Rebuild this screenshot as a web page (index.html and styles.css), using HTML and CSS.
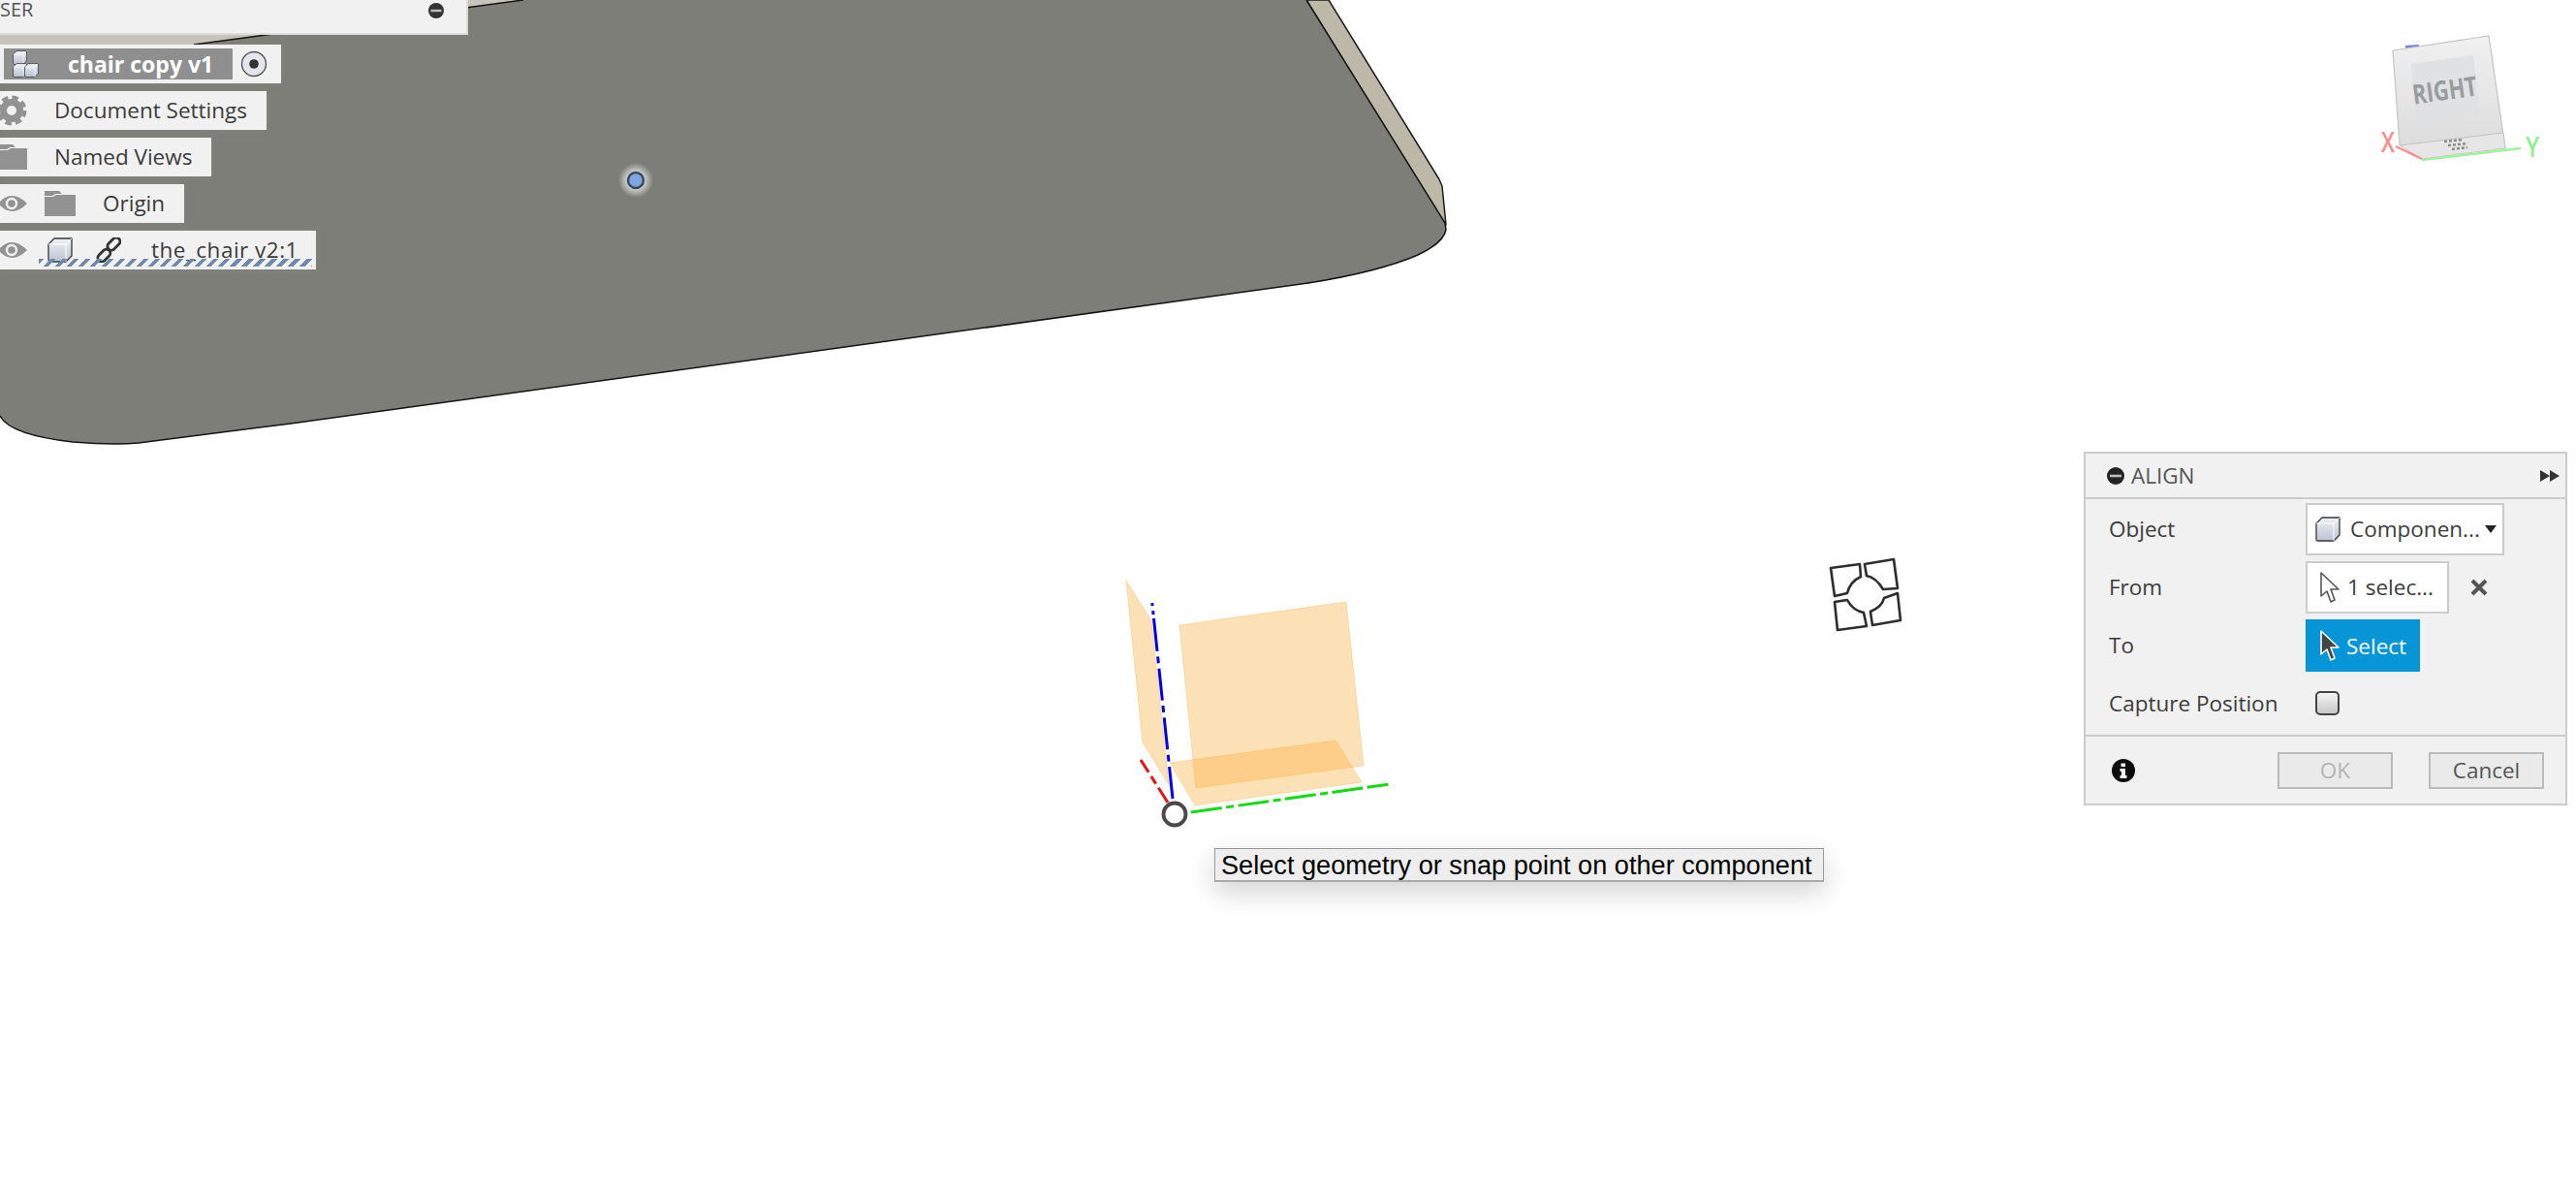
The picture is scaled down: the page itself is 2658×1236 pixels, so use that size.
FILE: index.html
```html
<!DOCTYPE html>
<html>
<head>
    <title>Align</title>
    <link rel="stylesheet" href="styles.css">
</head>
<body>
    <div class="stage">
        <!-- 3D viewport: model, datum planes, view cube -->
        <svg class="scene" width="2658" height="1236" viewBox="0 0 2658 1236">
            <defs>
                <linearGradient id="cube-front" x1="0" y1="0" x2="0" y2="1">
                    <stop offset="0" stop-color="#f0f0f0"/>
                    <stop offset="1" stop-color="#dcdcdc"/>
                </linearGradient>
                <linearGradient id="icon-face" x1="0" y1="0" x2="0" y2="1">
                    <stop offset="0" stop-color="#eef0f4"/>
                    <stop offset="1" stop-color="#bcc3d0"/>
                </linearGradient>
                <radialGradient id="halo">
                    <stop offset="0.4" stop-color="#fff" stop-opacity="0.75"/>
                    <stop offset="1" stop-color="#fff" stop-opacity="0"/>
                </radialGradient>
                <filter id="soft"><feGaussianBlur stdDeviation="0.6"/></filter>
                <symbol id="cube" viewBox="0 0 26 26">
                    <path d="M1 7 L7 1 H25 V19 L19 25 H3 Q1 25 1 23 Z" fill="url(#icon-face)" stroke="#33373d" stroke-width="1.3" stroke-linejoin="round"/>
                    <path d="M1 7 H19 L25 1 M19 7 V25" fill="none" stroke="#fff" stroke-width="1"/>
                </symbol>
            </defs>

            <!-- chair seat -->
            <path d="M0 0 H540 L200 46 H0 Z" fill="#c6c3b9"/>
            <path d="M1348 0 H1371 L1485 185 L1488 192 L1492 232 L1491 232 Z" fill="#bdb8a8" stroke="#1c1c1c" stroke-width="1.5" stroke-linejoin="round"/>
            <path d="M540 0 H1348 L1491 230 L1492 237 C1490 248 1478 256 1463 263 C1440 273 1400 284 1350 292 L300 437 L143 457 C120 459 100 458 75 456 C40 452 8 445 0 429 V46 H200 Z" fill="#7d7e77"/>
            <path d="M540 0 L200 46 M1348 0 L1491 230 L1492 237 C1490 248 1478 256 1463 263 C1440 273 1400 284 1350 292 L300 437 L143 457 C120 459 100 458 75 456 C40 452 8 445 0 429" fill="none" stroke="#141414" stroke-width="1.5"/>

            <!-- selected point on the seat -->
            <circle cx="656" cy="186" r="18" fill="url(#halo)"/>
            <circle cx="656" cy="186" r="8" fill="#7fa5e2" stroke="#3d4a5e" stroke-width="2.5"/>

            <!-- origin planes -->
            <g fill="#fbb040" fill-opacity="0.38" stroke="#fbb040" stroke-opacity="0.35">
                <path d="M1162 599 L1188 640 L1206 810 L1179 766 Z"/>
                <path d="M1217 645 L1389 621 L1407 790 L1234 813 Z"/>
                <path d="M1207 787 L1378 764 L1405 807 L1233 831 Z"/>
            </g>
            <g fill="none" stroke-width="3">
                <path d="M1210 824 L1188.800 622" stroke="#0000f0" stroke-dasharray="33 5.500 7 5.500 33 5.500 7 5.500 33 5.500 7 5.500 34 4 4 5 3"/>
                <path d="M1229 838 L1434 809" stroke="#10dc10" stroke-dasharray="32 4.500 8 4.500 32 4.500 8 4.500 32 4.500 8 4.500 32 4.500 22"/>
                <path d="M1205 828 L1177 784" stroke="#f01010" stroke-dasharray="18 5 9 5"/>
            </g>
            <circle cx="1212" cy="840" r="11.5" fill="#fff" stroke="#484848" stroke-width="3.8" filter="url(#soft)"/>

            <!-- capture cursor -->
            <g fill="none" stroke="#2e2e2e" stroke-width="2.6" stroke-linejoin="round" filter="url(#soft)">
                <path d="M1889 586 L1919 582 L1920 595 Q1909 600 1906 612 L1893 615 Z"/>
                <path d="M1924 582 L1954 577 L1958 607 L1943 608 Q1936 596 1926 594 Z"/>
                <path d="M1893 621 L1906 619 Q1912 630 1923 632 L1926 646 L1896 650 Z"/>
                <path d="M1930 631 Q1942 626 1944 617 L1958 612 L1961 640 L1932 645 Z"/>
            </g>

            <!-- view cube -->
            <path d="M2482 47 L2496 46 L2496 50 L2482 52 Z" fill="#7a7af0"/>
            <path d="M2469 52 L2568 37 L2585 153 L2476 150 Z" fill="url(#cube-front)" stroke="#c4c4c4" stroke-width="1.2"/>
            <path d="M2476 150 L2583 137 L2585 153 L2499 164 Z" fill="#e6e6e6" stroke="#c4c4c4"/>
            <path d="M2488 66 L2552 57 L2559 119 L2493 128 Z" fill="#e0e1e3"/>
            <path d="M2522 146 L2542 144 M2526 150 L2546 148 M2530 154 L2546 152" stroke="#8b8b8b" stroke-width="2.500" stroke-dasharray="3 2"/>
            <text class="cube-label" x="2489" y="103" textLength="67" lengthAdjust="spacingAndGlyphs" transform="rotate(-8 2523 93)">RIGHT</text>
            <path d="M2472 151 L2499 164" stroke="#ff8a8a" stroke-width="2"/>
            <path d="M2499 165 L2601 153" stroke="#9cf59c" stroke-width="2.500"/>
            <text class="axis-x" x="2457" y="157" textLength="14" lengthAdjust="spacingAndGlyphs">X</text>
            <text class="axis-y" x="2606" y="162" textLength="14" lengthAdjust="spacingAndGlyphs">Y</text>
        </svg>

        <!-- browser tree -->
        <div class="browser">
            <div class="browser-head">
                <span class="browser-title">SER</span>
                <svg class="collapse-icon" width="16" height="16" viewBox="0 0 16 16"><circle cx="8" cy="8" r="8" fill="#333"/><rect x="2.500" y="6.800" width="11" height="2.400" fill="#bbb"/></svg>
            </div>
            <div class="tree">
                <div class="tree-row">
                    <div class="root-label">
                        <svg class="icon-parts" width="30" height="30" viewBox="0 0 30 30">
                            <use href="#cube" x="3" y="1" width="15" height="15"/>
                            <use href="#cube" x="3" y="14" width="15" height="15"/>
                            <use href="#cube" x="15" y="14" width="15" height="15"/>
                        </svg>
                        <span>chair copy v1</span>
                    </div>
                    <svg class="radio" width="28" height="28" viewBox="0 0 28 28"><circle cx="14" cy="14" r="12.500" fill="#e4e6ee" stroke="#555" stroke-width="1.400"/><circle cx="14" cy="14" r="4.800" fill="#333"/></svg>
                </div>
                <div class="tree-row">
                    <svg class="icon-gear" width="28" height="32" viewBox="0 0 28 32"><g fill="none" stroke="#929292"><circle cx="12" cy="16" r="8.500" stroke-width="7"/><circle cx="12" cy="16" r="13.500" stroke-width="4" stroke-dasharray="6.500 4.100"/></g></svg>
                    <span class="tree-name">Document Settings</span>
                </div>
                <div class="tree-row">
                    <svg class="icon-folder" width="28" height="26" viewBox="0 0 28 26"><path d="M-4 0 H13 L16 3 H10 L7 5 H-4 Z M-4 6 H8 L11 4 H28 V26 H-4 Z" fill="#929292"/></svg>
                    <span class="tree-name">Named Views</span>
                </div>
                <div class="tree-row">
                    <svg class="icon-eye" width="28" height="20" viewBox="0 0 28 20"><path d="M-2 10 Q12 -6 28 10 Q12 26 -2 10 Z" fill="#929292"/><circle cx="12" cy="10" r="5" fill="none" stroke="#f1f1f1" stroke-width="2.400"/></svg>
                    <svg class="icon-folder origin-folder" width="32" height="26" viewBox="0 0 32 26"><path d="M0 0 H15 L18 3 H11 L8 5 H0 Z M0 6 H9 L12 4 H32 V26 H0 Z" fill="#929292"/></svg>
                    <span class="tree-name origin-name">Origin</span>
                </div>
                <div class="tree-row">
                    <svg class="icon-eye" width="28" height="20" viewBox="0 0 28 20"><path d="M-2 10 Q12 -6 28 10 Q12 26 -2 10 Z" fill="#929292"/><circle cx="12" cy="10" r="5" fill="none" stroke="#f1f1f1" stroke-width="2.400"/></svg>
                    <svg class="icon-cube" width="26" height="26"><use href="#cube" width="26" height="26"/></svg>
                    <svg class="icon-link" width="26" height="26" viewBox="0 0 26 26"><g fill="none" stroke="#333" stroke-width="2.800"><rect x="11" y="3" width="15" height="8" rx="4" transform="rotate(-45 18 7)"/><rect x="1" y="15" width="15" height="8" rx="4" transform="rotate(-45 8 19)"/></g></svg>
                    <span class="tree-name linked-name">the_chair v2:1</span>
                    <div class="link-underline"></div>
                </div>
            </div>
        </div>

        <!-- command dialog -->
        <div class="dialog">
            <div class="dialog-head">
                <svg width="18" height="18" viewBox="0 0 18 18"><circle cx="9" cy="9" r="9" fill="#222"/><rect x="3" y="7.700" width="12" height="2.600" fill="#bbb"/></svg>
                <span class="dialog-title">ALIGN</span>
                <svg class="expand-icon" width="20" height="12" viewBox="0 0 20 12"><path d="M0 0 L10 6 L0 12 Z M10 0 L20 6 L10 12 Z" fill="#333"/></svg>
            </div>
            <div class="dialog-body">
                <div class="field">
                    <span class="field-label">Object</span>
                    <div class="input-box object-box">
                        <svg class="input-cube" width="26" height="26"><use href="#cube" width="26" height="26"/></svg>
                        <span>Componen...</span>
                        <svg class="caret" width="12" height="8" viewBox="0 0 12 8"><path d="M0 0 H12 L6 8 Z" fill="#222"/></svg>
                    </div>
                </div>
                <div class="field">
                    <span class="field-label">From</span>
                    <div class="input-box from-box">
                        <svg width="20" height="32" viewBox="0 0 20 32"><path d="M1 1 V25 L7 20 L11 31 L15 29 L11 18 L19 18 Z" fill="#fff" stroke="#555" stroke-width="1.600" stroke-linejoin="round"/></svg>
                        <span>1 selec...</span>
                    </div>
                    <svg class="clear-icon" width="18" height="18" viewBox="0 0 18 18"><path d="M2 2 L16 16 M16 2 L2 16" stroke="#555" stroke-width="4"/></svg>
                </div>
                <div class="field">
                    <span class="field-label">To</span>
                    <div class="select-box">
                        <svg width="20" height="32" viewBox="0 0 20 32"><path d="M1 1 V25 L7 20 L11 31 L15 29 L11 18 L19 18 Z" fill="#444" stroke="#fff" stroke-width="1.600" stroke-linejoin="round"/></svg>
                        <span>Select</span>
                    </div>
                </div>
                <div class="field">
                    <span class="field-label">Capture Position</span>
                    <div class="checkbox"></div>
                </div>
            </div>
            <div class="dialog-foot">
                <svg class="info-icon" width="24" height="24" viewBox="0 0 24 24"><circle cx="12" cy="12" r="12" fill="#0c0c0c"/><path d="M9.500 4.500 H14 V8 H9.500 Z M8.500 10 H14 V17 H15.500 V20 H8.500 V17 H10 V13 H8.500 Z" fill="#f1f1f1"/></svg>
                <button class="btn btn-disabled">OK</button>
                <button class="btn">Cancel</button>
            </div>
        </div>

        <div class="hint">Select geometry or snap point on other component</div>
    </div>
</body>
</html>
```

FILE: styles.css
```css
html, body {
    margin: 0;
    padding: 0;
    background-color: #ffffff;
}

.stage {
    position: relative;
    width: 2658px;
    height: 1236px;
    overflow: hidden;
    font-family: "Open Sans", Arial, sans-serif;
    font-size: 22.5px;
    color: #3c3c3c;
}

.scene {
    position: absolute;
    left: 0;
    top: 0;
}

.cube-label {
    font-family: "Open Sans", sans-serif;
    font-weight: 700;
    font-size: 28px;
    fill: #999ca0;
}

.axis-x, .axis-y {
    font-family: "Open Sans", sans-serif;
    font-weight: 600;
    font-size: 28px;
}

.axis-x {
    fill: #ff8a8a;
}

.axis-y {
    fill: #8cf08c;
}

/* Browser tree */
.browser {
    position: absolute;
    left: 0;
    top: 0;
    display: flex;
    flex-direction: column;
    align-items: flex-start;
}

.browser-head {
    display: flex;
    align-items: flex-start;
    justify-content: space-between;
    box-sizing: border-box;
    width: 483px;
    height: 36px;
    padding-right: 23px;
    background-color: #f1f1f1;
    border-right: 2px solid #dddddd;
    border-bottom: 2px solid #dddddd;
}

.browser-title {
    font-size: 20px;
    line-height: 20px;
    color: #555555;
}

.collapse-icon {
    margin-top: 3px;
}

.tree {
    display: flex;
    flex-direction: column;
    align-items: flex-start;
    gap: 8px;
    margin-top: 10px;
}

.tree-row {
    position: relative;
    display: flex;
    align-items: center;
    height: 40px;
    padding-right: 20px;
    background-color: #f1f1f1;
    box-shadow: 0 0 6px rgba(255, 255, 255, 0.08);
}

.root-label {
    display: flex;
    align-items: center;
    box-sizing: border-box;
    width: 236px;
    height: 32px;
    margin-left: 4px;
    padding-left: 6px;
    background-color: #8f8f8f;
    color: #ffffff;
    font-size: 23px;
    font-weight: 700;
}

.root-label span {
    margin-left: 30px;
}

.radio {
    margin-left: 8px;
    margin-right: -6px;
}

.tree-name {
    margin-left: 28px;
    padding-bottom: 2px;
}

.origin-folder {
    margin-left: 18px;
}

.origin-name {
    margin-left: 28px;
}

.icon-cube {
    margin-left: 21px;
}

.icon-link {
    margin-left: 24px;
}

.linked-name {
    margin-left: 31px;
    margin-right: -2px;
    letter-spacing: 0.5px;
}

.link-underline {
    position: absolute;
    left: 40px;
    right: 4px;
    bottom: 3px;
    height: 8px;
    background-image: repeating-linear-gradient(135deg, #7089ae 0 4px, transparent 4px 8.5px);
}

/* Align dialog */
.dialog {
    position: absolute;
    left: 2150px;
    top: 466px;
    box-sizing: border-box;
    width: 499px;
    height: 365px;
    background-color: #f1f1f1;
    border: 2px solid #cccccc;
}

.dialog-head {
    display: flex;
    align-items: center;
    box-sizing: border-box;
    height: 47px;
    padding: 0 6px 0 22px;
    border-bottom: 2px solid #cccccc;
}

.dialog-title {
    margin-left: 7px;
    color: #555555;
}

.expand-icon {
    margin-left: auto;
}

.dialog-body {
    display: flex;
    flex-direction: column;
    gap: 6px;
    box-sizing: border-box;
    height: 245px;
    padding: 4px 0 0 24px;
    border-bottom: 2px solid #cccccc;
}

.field {
    display: flex;
    align-items: center;
    height: 54px;
}

.field-label {
    width: 203px;
    flex-shrink: 0;
    padding-bottom: 2px;
}

.input-box {
    display: flex;
    align-items: center;
    box-sizing: border-box;
    height: 54px;
    background-color: #ffffff;
    border: 2px solid #cccccc;
    padding-bottom: 1px;
}

.object-box {
    width: 205px;
    padding-left: 8px;
}

.object-box span {
    margin-left: 10px;
    white-space: nowrap;
}

.caret {
    margin-left: 5px;
}

.from-box {
    width: 148px;
    padding-left: 13px;
}

.from-box span {
    margin-left: 8px;
    white-space: nowrap;
}

.clear-icon {
    margin-left: 22px;
}

.select-box {
    display: flex;
    align-items: center;
    box-sizing: border-box;
    width: 118px;
    height: 54px;
    padding-left: 15px;
    background-color: #0696d7;
    color: #ffffff;
}

.select-box span {
    margin-left: 7px;
}

.checkbox {
    box-sizing: border-box;
    width: 25px;
    height: 25px;
    margin-left: 10px;
    margin-top: -2px;
    border: 2px solid #444444;
    border-radius: 5px;
    background-image: linear-gradient(#f4f4f4, #c8c8c8);
}

.dialog-foot {
    display: flex;
    align-items: center;
    height: 69px;
    padding-left: 27px;
}

.btn {
    box-sizing: border-box;
    width: 119px;
    height: 38px;
    padding: 0;
    background-color: #eaeaea;
    border: 2px solid #bbbbbb;
    border-radius: 0;
    font-family: inherit;
    font-size: 22.5px;
    color: #555555;
}

.btn-disabled {
    margin-left: 147px;
    margin-right: 37px;
    color: #b4b4b4;
}

/* Tooltip under the cursor */
.hint {
    position: absolute;
    left: 1253px;
    top: 875px;
    box-sizing: border-box;
    width: 629px;
    height: 35px;
    padding-left: 6px;
    background-color: #eeeeee;
    border: 1px solid #999999;
    border-bottom: 2px solid #aaaaaa;
    box-shadow: 0 10px 28px rgba(0, 0, 0, 0.18);
    font-family: "Liberation Sans", Arial, sans-serif;
    font-size: 27.15px;
    line-height: 33px;
    color: #000000;
    white-space: nowrap;
}
```
